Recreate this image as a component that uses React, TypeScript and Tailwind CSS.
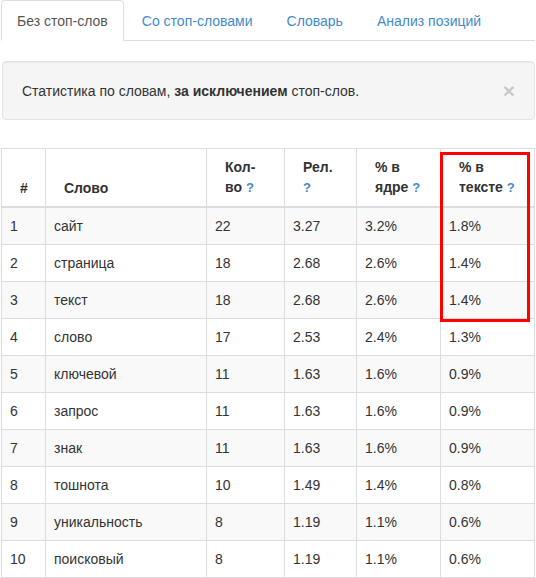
import React from "react";

const tabs = ["Без стоп-слов", "Со стоп-словами", "Словарь", "Анализ позиций"];

const rows: [number, string, number, string, string, string][] = [
    [1, "сайт", 22, "3.27", "3.2%", "1.8%"],
    [2, "страница", 18, "2.68", "2.6%", "1.4%"],
    [3, "текст", 18, "2.68", "2.6%", "1.4%"],
    [4, "слово", 17, "2.53", "2.4%", "1.3%"],
    [5, "ключевой", 11, "1.63", "1.6%", "0.9%"],
    [6, "запрос", 11, "1.63", "1.6%", "0.9%"],
    [7, "знак", 11, "1.63", "1.6%", "0.9%"],
    [8, "тошнота", 10, "1.49", "1.4%", "0.8%"],
    [9, "уникальность", 8, "1.19", "1.1%", "0.6%"],
    [10, "поисковый", 8, "1.19", "1.1%", "0.6%"],
];

const Q = () => <span className="text-[#428bca] text-[13px]">?</span>;

const App: React.FC = () => {
    return (
        <div
            className="w-[536px] min-h-[578px] bg-white px-[1px] text-[14px] leading-5 text-[#333]"
            style={{ fontFamily: '"Liberation Sans", Arial, sans-serif' }}
        >
            {/* tabs */}
            <ul className="flex border-b border-[#ddd]">
                {tabs.map((t, i) => (
                    <li key={t} className="mr-[2px] -mb-px">
                        <span
                            className={
                                i === 0
                                    ? "block px-[15px] pt-[10px] pb-[9px] border border-[#ddd] border-b-transparent rounded-t bg-white text-[#555]"
                                    : "block px-[15px] pt-[10px] pb-[9px] border border-transparent text-[#428bca]"
                            }
                        >
                            {t}
                        </span>
                    </li>
                ))}
            </ul>

            {/* well */}
            <div className="mt-5 ml-[1px] flex items-center justify-between rounded border border-[#e3e3e3] bg-[#f5f5f5] px-[19px] py-[18px] shadow-[inset_0_1px_1px_rgba(0,0,0,0.05)]">
                <p>
                    Статистика по словам, <b>за исключением</b> стоп-слов.
                </p>
                <span className="text-[21px] leading-none font-bold text-black/20">×</span>
            </div>

            {/* table */}
            <div className="relative mt-[28px]">
                <table className="w-[533px] table-fixed border-collapse border border-[#ddd]">
                    <colgroup>
                        <col className="w-[44px]" />
                        <col className="w-[161px]" />
                        <col className="w-[78px]" />
                        <col className="w-[72px]" />
                        <col className="w-[84px]" />
                        <col className="w-[94px]" />
                    </colgroup>
                    <thead>
                        <tr className="text-left align-bottom font-bold">
                            <th className="border border-b-2 border-[#ddd] pl-[18px] pr-2 py-2">#</th>
                            <th className="border border-b-2 border-[#ddd] pl-[18px] pr-2 py-2">Слово</th>
                            <th className="border border-b-2 border-[#ddd] pl-[18px] pr-2 py-2">
                                Кол-<br />во <Q />
                            </th>
                            <th className="border border-b-2 border-[#ddd] pl-[18px] pr-2 py-2">
                                Рел.<br /><Q />
                            </th>
                            <th className="border border-b-2 border-[#ddd] pl-[18px] pr-2 py-2">
                                % в<br />ядре <Q />
                            </th>
                            <th className="border border-b-2 border-[#ddd] pl-[18px] pr-2 py-2">
                                % в<br />тексте <Q />
                            </th>
                        </tr>
                    </thead>
                    <tbody>
                        {rows.map((r, i) => (
                            <tr key={r[0]} className={i % 2 === 0 ? "bg-[#f9f9f9]" : "bg-white"}>
                                {r.map((c, j) => (
                                    <td key={j} className="border border-[#ddd] p-2">
                                        {c}
                                    </td>
                                ))}
                            </tr>
                        ))}
                    </tbody>
                </table>
                {/* highlight */}
                <div className="absolute left-[439px] top-[4px] w-[90px] h-[170px] border-[3px] border-[#ff0000] pointer-events-none" />
            </div>
        </div>
    );
};

export default App;
